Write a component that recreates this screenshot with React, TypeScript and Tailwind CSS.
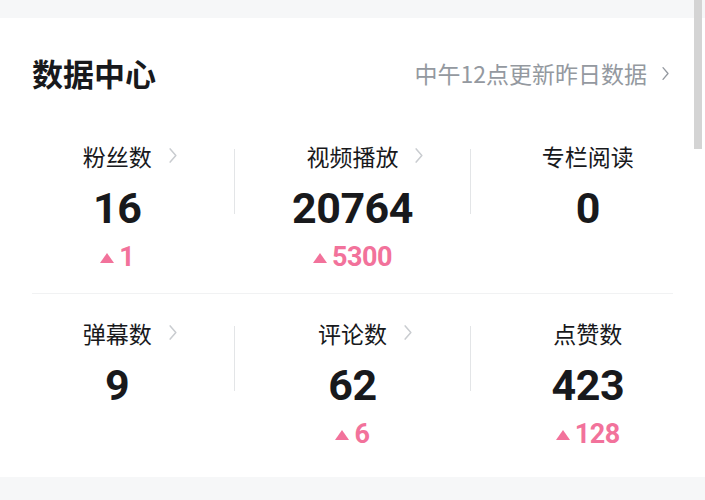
import React from 'react';

type Stat = { label: string; value: string; delta?: string; link?: boolean };

const rows: Stat[][] = [
  [
    { label: '粉丝数', value: '16', delta: '1', link: true },
    { label: '视频播放', value: '20764', delta: '5300', link: true },
    { label: '专栏阅读', value: '0' },
  ],
  [
    { label: '弹幕数', value: '9', link: true },
    { label: '评论数', value: '62', delta: '6', link: true },
    { label: '点赞数', value: '423', delta: '128' },
  ],
];

const cjk = { fontFamily: '"Noto Sans CJK SC", "Noto Sans", sans-serif' };
const num = { fontFamily: 'Roboto, "Noto Sans", sans-serif' };

function Chevron({ className, color }: { className?: string; color: string }) {
  return (
    <svg viewBox="0 0 10 18" className={className} fill="none">
      <path d="M2 2l6 7-6 7" stroke={color} strokeWidth="1.6" strokeLinecap="round" strokeLinejoin="round" />
    </svg>
  );
}

function StatCell({ stat }: { stat: Stat }) {
  return (
    <div className="flex-1 flex flex-col items-center">
      <div className="relative text-[23px] leading-[32px] text-[#18191c]" style={cjk}>
        {stat.label}
        {stat.link && (
          <Chevron className="absolute left-[calc(100%+16px)] top-[7px] w-[10px] h-[17px]" color="#c9ccd0" />
        )}
      </div>
      <div className="mt-[12px] text-[43px] leading-[48px] font-bold text-[#18191c] tracking-[-0.5px]" style={num}>
        {stat.value}
      </div>
      <div className="mt-[9px] h-[32px] flex items-center gap-[5px] text-[#f2729b]">
        {stat.delta && (
          <>
            <svg viewBox="0 0 14 10" className="w-[14px] h-[10px] mt-[1px]">
              <path d="M7 0L14 10H0z" fill="#f2729b" />
            </svg>
            <span className="text-[27px] leading-[32px] font-bold tracking-[-0.5px]" style={num}>
              {stat.delta}
            </span>
          </>
        )}
      </div>
    </div>
  );
}

function StatRow({ stats }: { stats: Stat[] }) {
  return (
    <div className="flex">
      {stats.map((s, i) => (
        <React.Fragment key={s.label}>
          {i > 0 && <div className="w-px h-[65px] mt-[9px] bg-[#e3e5e7]" />}
          <StatCell stat={s} />
        </React.Fragment>
      ))}
    </div>
  );
}

export default function App() {
  return (
    <div className="relative w-full h-[500px] overflow-hidden bg-[#f6f7f8] pt-[18px]">
      <div className="h-[459px] bg-white">
        <div className="flex items-center justify-between px-[32px] pt-[37px]">
          <div className="text-[31px] leading-[36px] font-bold text-[#18191c]" style={cjk}>
            数据中心
          </div>
          <div className="flex items-center gap-[14px] text-[23px] leading-[32px] text-[#9499a0] pr-[3px]" style={cjk}>
            <span>中午12点更新昨日数据</span>
            <Chevron className="w-[9px] h-[15px]" color="#9499a0" />
          </div>
        </div>
        <div className="mt-[49px]">
          <StatRow stats={rows[0]} />
        </div>
        <div className="mx-[32px] mt-[20px] mb-[23px] h-px bg-[#f1f2f3]" />
        <StatRow stats={rows[1]} />
      </div>
      <div className="absolute right-[3px] top-0 w-[8px] h-[149px] bg-[#d4d4d4]" />
    </div>
  );
}
